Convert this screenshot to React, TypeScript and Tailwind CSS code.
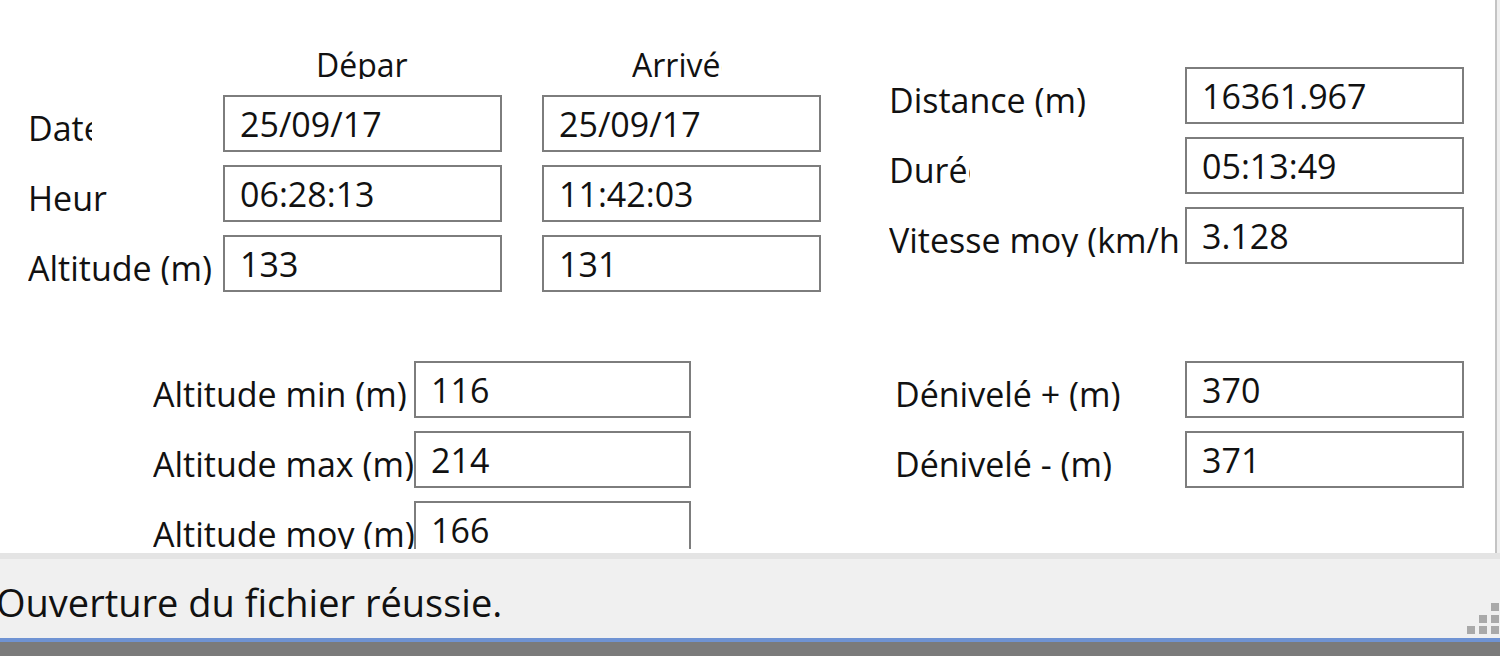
import clsx from "clsx";

type Row = { label: string; value: string; clip?: string };

const TextBox = ({ value, width = "w-[279px]" }: { value: string; width?: string }) => (
  <div
    className={clsx(
      "h-[57px] shrink-0 border-2 border-[#7d7d7d] bg-white pl-[15px] flex items-center leading-[34px] whitespace-nowrap",
      width
    )}
  >
    {value}
  </div>
);

// WinForms labels cut their text at their own bounds
const FieldLabel = ({ text, clip }: { text: string; clip?: string }) => (
  <div className="h-[57px] pt-[16px] overflow-hidden whitespace-nowrap">
    <div className={clsx("overflow-hidden leading-[34px]", clip)}>{text}</div>
  </div>
);

const depart: Row[] = [
  { label: "Date", value: "25/09/17", clip: "w-[64px]" },
  { label: "Heure", value: "06:28:13", clip: "w-[80px]" },
  { label: "Altitude (m)", value: "133" },
];

const arrivee = ["25/09/17", "11:42:03", "131"];

const totals: Row[] = [
  { label: "Distance (m)", value: "16361.967" },
  { label: "Durée", value: "05:13:49", clip: "w-[81px]" },
  { label: "Vitesse moy (km/h)", value: "3.128", clip: "w-[291px]" },
];

const altitudes: Row[] = [
  { label: "Altitude min (m)", value: "116" },
  { label: "Altitude max (m)", value: "214" },
  { label: "Altitude moy (m)", value: "166" },
];

const denivele: Row[] = [
  { label: "Dénivelé + (m)", value: "370" },
  { label: "Dénivelé - (m)", value: "371" },
];

const Grip = () => (
  <svg width="32" height="31" viewBox="0 0 32 31" className="self-end mb-[4px] mr-[1px] shrink-0">
    <rect x="24" y="0" width="8" height="8" fill="#a9a9a9" />
    <rect x="12" y="12" width="8" height="8" fill="#a9a9a9" />
    <rect x="24" y="12" width="8" height="8" fill="#a9a9a9" />
    <rect x="0" y="23" width="8" height="8" fill="#a9a9a9" />
    <rect x="12" y="23" width="8" height="8" fill="#a9a9a9" />
    <rect x="24" y="23" width="8" height="8" fill="#a9a9a9" />
  </svg>
);

export default function App() {
  return (
    <div className="w-[1500px] h-[656px] overflow-hidden bg-[#f0f0f0] font-['Open_Sans',sans-serif] text-[34px] text-[#111]">
      <div className="w-[1497px] h-[553px] bg-white border-r-2 border-[#c4c4c4]">
        <div className="h-[549px] overflow-hidden">
          <div className="flex items-start">
            <div className="ml-[28px] mt-[48px] grid grid-cols-[195px_279px_319px] gap-y-[13px]">
              <div className="h-[34px]" />
              <div className="h-[34px]">
                <div className="ml-[93px] w-[92px] h-[31px] overflow-hidden whitespace-nowrap text-[32px] leading-[34px]">
                  Départ
                </div>
              </div>
              <div className="h-[34px]">
                <div className="ml-[130px] w-[90px] h-[31px] overflow-hidden whitespace-nowrap text-[32px] leading-[34px]">
                  Arrivée
                </div>
              </div>
              {depart.map((row, i) => (
                <>
                  <FieldLabel key={row.label} text={row.label} clip={row.clip} />
                  <TextBox key={row.label + "-d"} value={row.value} />
                  <div key={row.label + "-a"} className="pl-[40px]">
                    <TextBox value={arrivee[i]} />
                  </div>
                </>
              ))}
            </div>

            <div className="ml-[68px] mt-[67px] grid grid-cols-[296px_279px] gap-y-[13px]">
              {totals.map((row) => (
                <>
                  <FieldLabel key={row.label} text={row.label} clip={row.clip} />
                  <TextBox key={row.label + "-v"} value={row.value} />
                </>
              ))}
            </div>
          </div>

          <div className="flex items-start mt-[69px]">
            <div className="ml-[153px] grid grid-cols-[261px_277px] gap-y-[13px]">
              {altitudes.map((row) => (
                <>
                  <FieldLabel key={row.label} text={row.label} />
                  <TextBox key={row.label + "-v"} value={row.value} width="w-[277px]" />
                </>
              ))}
            </div>

            <div className="ml-[204px] grid grid-cols-[290px_279px] gap-y-[13px]">
              {denivele.map((row) => (
                <>
                  <FieldLabel key={row.label} text={row.label} />
                  <TextBox key={row.label + "-v"} value={row.value} />
                </>
              ))}
            </div>
          </div>
        </div>
      </div>

      <div className="h-[85px] border-t-[6px] border-[#e4e4e4] bg-[#f0f0f0] flex justify-between">
        <div className="ml-[-4px] pt-[24px] text-[38px] leading-[38px] whitespace-nowrap">
          Ouverture du fichier réussie.
        </div>
        <Grip />
      </div>
      <div className="h-[4px] bg-[#6f93d3]" />
      <div className="h-[14px] bg-[#7b7b7b]" />
    </div>
  );
}
